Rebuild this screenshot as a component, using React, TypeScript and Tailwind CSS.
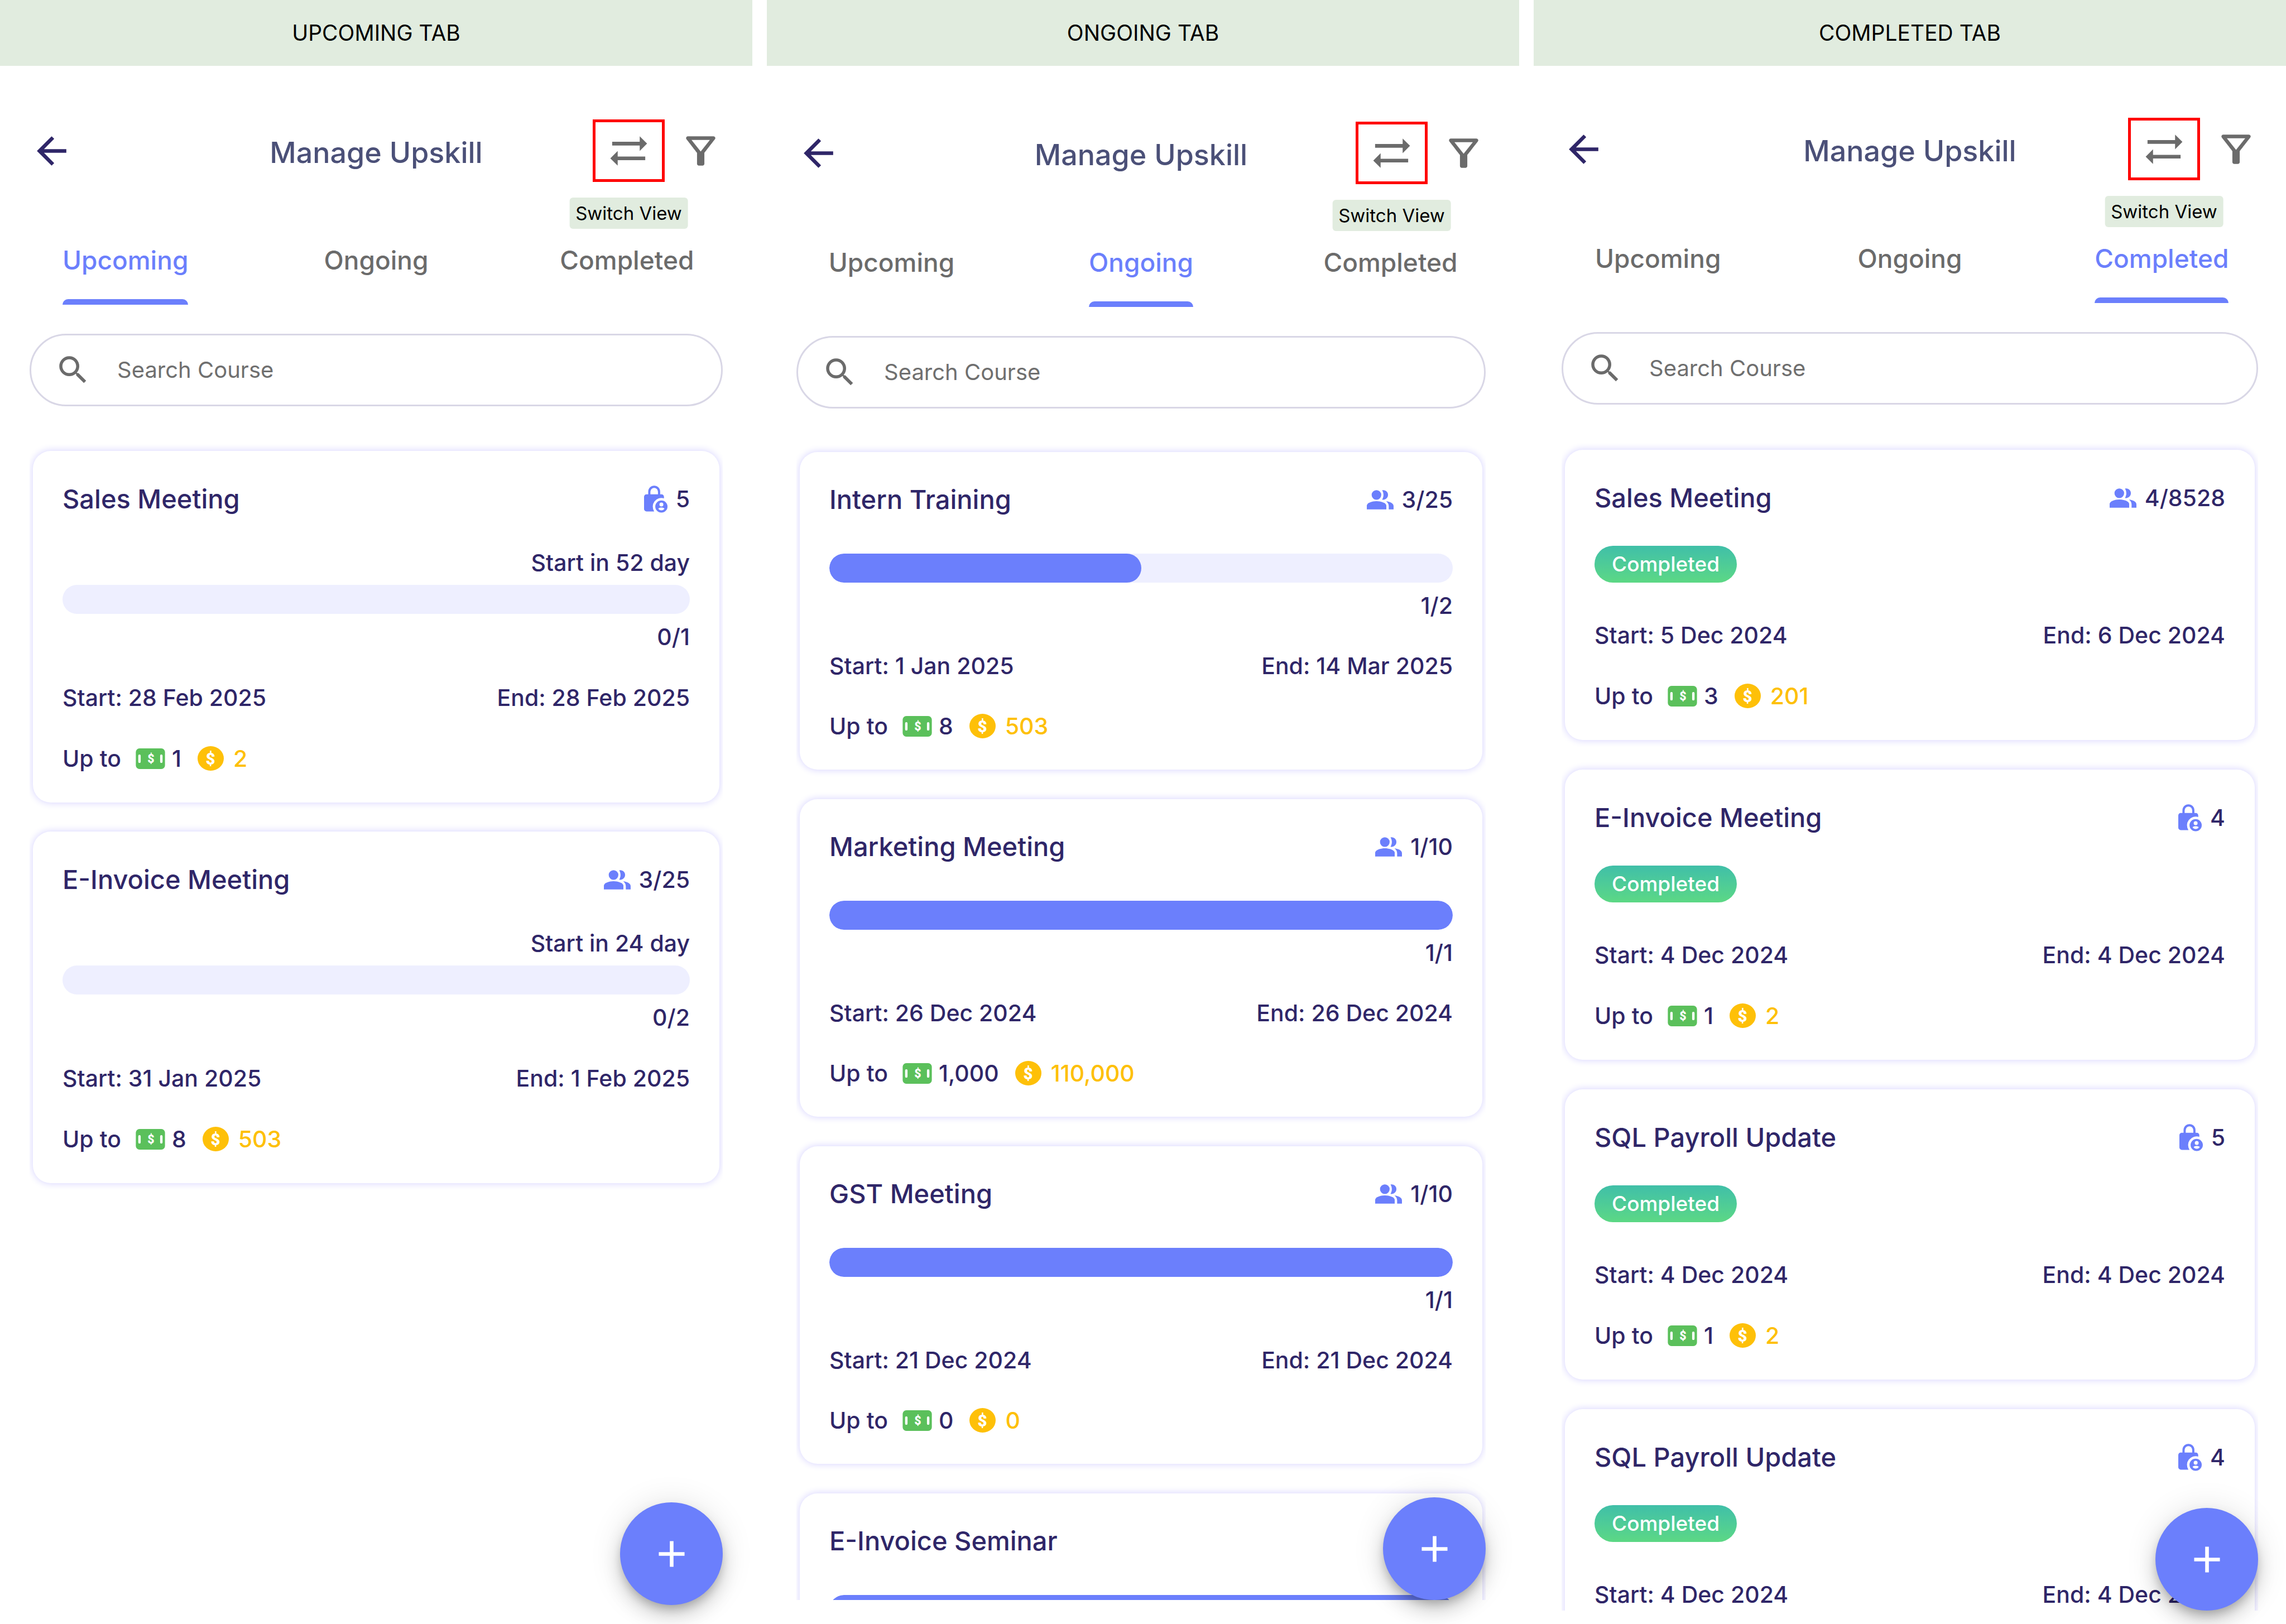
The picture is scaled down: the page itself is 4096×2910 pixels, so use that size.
import React from "react";
import { MdAdd, MdArrowBack, MdOutlineFilterAlt, MdSearch } from "react-icons/md";

type Course = {
  title: string;
  access: "group" | "private";
  seats: string;
  startsIn?: string;
  progress?: { done: number; total: number };
  dates?: { start: string; end: string };
  reward?: { cash: string; coins: string };
};

type Tab = "Upcoming" | "Ongoing" | "Completed";

type Screen = {
  banner: string;
  tab: Tab;
  frame: string;
  header: string;
  list: string;
  card: string;
  courses: Course[];
};

const TABS: Tab[] = ["Upcoming", "Ongoing", "Completed"];

const SCREENS: Screen[] = [
  {
    banner: "UPCOMING TAB",
    tab: "Upcoming",
    frame: "mb-[34px]",
    header: "pt-[96px]",
    list: "pt-[80px] gap-[52px]",
    card: "px-[53px] pt-[53px] pb-[51px] gap-[53px]",
    courses: [
      {
        title: "Sales Meeting",
        access: "private",
        seats: "5",
        startsIn: "Start in 52 day",
        progress: { done: 0, total: 1 },
        dates: { start: "28 Feb 2025", end: "28 Feb 2025" },
        reward: { cash: "1", coins: "2" },
      },
      {
        title: "E-Invoice Meeting",
        access: "group",
        seats: "3/25",
        startsIn: "Start in 24 day",
        progress: { done: 0, total: 2 },
        dates: { start: "31 Jan 2025", end: "1 Feb 2025" },
        reward: { cash: "8", coins: "503" },
      },
    ],
  },
  {
    banner: "ONGOING TAB",
    tab: "Ongoing",
    frame: "mr-[7px] mb-[43px]",
    header: "pt-[100px]",
    list: "pt-[78px] gap-[53px]",
    card: "px-[53px] pt-[52px] pb-[50px] gap-[52px]",
    courses: [
      {
        title: "Intern Training",
        access: "group",
        seats: "3/25",
        progress: { done: 1, total: 2 },
        dates: { start: "1 Jan 2025", end: "14 Mar 2025" },
        reward: { cash: "8", coins: "503" },
      },
      {
        title: "Marketing Meeting",
        access: "group",
        seats: "1/10",
        progress: { done: 1, total: 1 },
        dates: { start: "26 Dec 2024", end: "26 Dec 2024" },
        reward: { cash: "1,000", coins: "110,000" },
      },
      {
        title: "GST Meeting",
        access: "group",
        seats: "1/10",
        progress: { done: 1, total: 1 },
        dates: { start: "21 Dec 2024", end: "21 Dec 2024" },
        reward: { cash: "0", coins: "0" },
      },
      {
        title: "E-Invoice Seminar",
        access: "private",
        seats: "5",
        progress: { done: 1, total: 1 },
      },
    ],
  },
  {
    banner: "COMPLETED TAB",
    tab: "Completed",
    frame: "-mx-[3px] mb-[24px]",
    header: "pt-[93px]",
    list: "pt-[81px] gap-[53px]",
    card: "px-[53px] pt-[53px] pb-[51px] gap-[53px]",
    courses: [
      {
        title: "Sales Meeting",
        access: "group",
        seats: "4/8528",
        dates: { start: "5 Dec 2024", end: "6 Dec 2024" },
        reward: { cash: "3", coins: "201" },
      },
      {
        title: "E-Invoice Meeting",
        access: "private",
        seats: "4",
        dates: { start: "4 Dec 2024", end: "4 Dec 2024" },
        reward: { cash: "1", coins: "2" },
      },
      {
        title: "SQL Payroll Update",
        access: "private",
        seats: "5",
        dates: { start: "4 Dec 2024", end: "4 Dec 2024" },
        reward: { cash: "1", coins: "2" },
      },
      {
        title: "SQL Payroll Update",
        access: "private",
        seats: "4",
        dates: { start: "4 Dec 2024", end: "4 Dec 2024" },
      },
    ],
  },
];

function SwapIcon() {
  return (
    <svg viewBox="0 0 24 24" className="size-[79px] shrink-0" fill="currentColor" aria-hidden="true">
      <path d="M3 7h15V4l4 4-4 4V9H3zM21 17H6v3l-4-4 4-4v3h15z" />
    </svg>
  );
}

function LockPersonIcon() {
  return (
    <svg viewBox="0 0 192 224" className="h-[49px] w-[42px] shrink-0" aria-hidden="true">
      <path d="M43 76V50a40 40 0 0 1 80 0v26" fill="none" stroke="#6b7ffc" strokeWidth="18" />
      <path
        d="M20 72h123a20 20 0 0 1 20 20v13a71 71 0 0 0-80 107H20a20 20 0 0 1-20-20V92a20 20 0 0 1 20-20z"
        fill="#6b7ffc"
      />
      <circle cx="142" cy="172" r="50" fill="#6b7ffc" />
      <circle cx="142" cy="155" r="16" fill="#fff" />
      <path d="M117 188c8-10 42-10 50 0-10 20-40 20-50 0z" fill="#fff" />
    </svg>
  );
}

function PeopleIcon() {
  return (
    <svg viewBox="0 0 222 162" className="h-[35px] w-[48px] shrink-0" fill="#6b7ffc" aria-hidden="true">
      <circle cx="80" cy="41" r="40" />
      <path d="M127 2a40 40 0 1 1 0 78c15-24 15-54 0-78z" />
      <path d="M0 161v-31c0-24 44-38 80-38s82 14 82 38v31z" />
      <path d="M160 94c34 3 62 17 62 40v27h-40v-27c0-16-8-30-22-40z" />
    </svg>
  );
}

function CashIcon() {
  return (
    <svg viewBox="0 0 240 170" className="h-[37px] w-[53px] shrink-0" aria-hidden="true">
      <rect width="240" height="170" rx="30" fill="#5bc05b" />
      <rect x="20" y="50" width="20" height="70" rx="10" fill="#fff" />
      <rect x="200" y="50" width="20" height="70" rx="10" fill="#fff" />
      <text x="124" y="121" fontSize="98" fontWeight="900" textAnchor="middle" fill="#fff" className="font-[Roboto]">
        $
      </text>
    </svg>
  );
}

function CoinIcon() {
  return (
    <svg viewBox="0 0 214 200" className="h-[44px] w-[47px] shrink-0" aria-hidden="true">
      <ellipse cx="107" cy="100" rx="107" ry="100" fill="#fec008" />
      <text x="105" y="148" fontSize="134" fontWeight="900" textAnchor="middle" fill="#fff" className="font-[Roboto]">
        $
      </text>
    </svg>
  );
}

function ProgressBlock({ course }: { course: Course }) {
  const { done, total } = course.progress!;
  return (
    <div className="flex flex-col text-right">
      {course.startsIn && <p>{course.startsIn}</p>}
      <div
        role="progressbar"
        aria-label={`${course.title} progress`}
        aria-valuenow={done}
        aria-valuemax={total}
        className="mt-[12px] mb-[13px] h-[52px] overflow-hidden rounded-full bg-[#eeefff]"
      >
        <div className="h-full rounded-full bg-[#6b7ffc]" style={{ width: `${(done / total) * 100}%` }} />
      </div>
      <p>
        {done}/{total}
      </p>
    </div>
  );
}

function CourseCard({ course, className }: { course: Course; className: string }) {
  return (
    <li
      className={`flex shrink-0 flex-col rounded-[32px] bg-white text-[41px] leading-[56px] font-medium text-[#2f2668] shadow-[0_0_13px_1px_#d9d6ff] ${className}`}
    >
      <div className="flex items-center justify-between">
        <h2 className="text-[47px] leading-[66px]">{course.title}</h2>
        <div className="flex items-center gap-[15px]">
          {course.access === "group" ? <PeopleIcon /> : <LockPersonIcon />}
          <span>{course.seats}</span>
        </div>
      </div>
      {course.progress ? (
        <ProgressBlock course={course} />
      ) : (
        <div className="mb-[13px] flex">
          <span className="rounded-full bg-linear-to-b from-[#40bfa8] to-[#5cd884] px-[31px] text-[37px] leading-[66px] text-white">
            Completed
          </span>
        </div>
      )}
      {course.dates && (
        <div className="flex justify-between">
          <span>Start: {course.dates.start}</span>
          <span>End: {course.dates.end}</span>
        </div>
      )}
      {course.reward && (
        <div className="flex items-center">
          <span className="mr-[26px]">Up to</span>
          <CashIcon />
          <span className="mr-[29px] ml-[12px]">{course.reward.cash}</span>
          <CoinIcon />
          <span className="ml-[17px] text-[#fec008]">{course.reward.coins}</span>
        </div>
      )}
    </li>
  );
}

function ScreenView({ screen }: { screen: Screen }) {
  return (
    <section className="flex min-h-0 min-w-0 flex-col overflow-hidden">
      <h1 className="bg-[#e1ecdf] text-center text-[39px] leading-[118px] text-black">{screen.banner}</h1>
      <div className={`relative flex min-h-0 flex-1 flex-col ${screen.frame}`}>
        <header className={`grid grid-cols-[1fr_auto_1fr] items-center px-[53px] ${screen.header}`}>
          <button type="button" aria-label="Back" className="justify-self-start text-[#2f2668]">
            <MdArrowBack className="size-[79px]" />
          </button>
          <p className="pt-[8px] text-[52px] leading-[64px] font-medium text-[#4b5078]">Manage Upskill</p>
          <div className="flex items-center gap-[25px] justify-self-end text-[#6b6b6b]">
            <div className="relative">
              <button
                type="button"
                aria-label="Switch View"
                className="flex h-[112px] w-[129px] items-center justify-center border-[5px] border-[#ff0000]"
              >
                <SwapIcon />
              </button>
              <div
                role="tooltip"
                className="absolute top-full left-1/2 mt-[28px] -translate-x-1/2 rounded-[6px] bg-[#e1ecdf] px-[11px] text-[33px] leading-[56px] whitespace-nowrap text-black"
              >
                Switch View
              </div>
            </div>
            <button type="button" aria-label="Filter">
              <MdOutlineFilterAlt className="size-[79px]" />
            </button>
          </div>
        </header>

        <div role="tablist" className="mt-[108px] grid grid-cols-3 justify-items-center">
          {TABS.map((tab) => {
            const active = tab === screen.tab;
            return (
              <button
                key={tab}
                type="button"
                role="tab"
                aria-selected={active}
                className={`flex flex-col text-[46px] leading-[64px] font-medium ${
                  active ? "text-[#6b7ffc]" : "text-[#6b6b6b]"
                }`}
              >
                {tab}
                <span className={`mt-[38px] h-[10px] w-full rounded-t-[10px] ${active ? "bg-[#6b7ffc]" : ""}`} />
              </button>
            );
          })}
        </div>

        <label className="mx-[53px] mt-[52px] flex h-[130px] shrink-0 items-center gap-[46px] rounded-full border-[3px] border-[#d9d7e6] pr-[53px] pl-[42px] text-[#6b6b6b]">
          <MdSearch className="size-[66px] shrink-0" />
          <input
            type="search"
            aria-label="Search Course"
            placeholder="Search Course"
            className="min-w-0 flex-1 text-[40px] leading-[56px] outline-none placeholder:text-[#6f6f6f]"
          />
        </label>

        <ul className={`mx-[53px] flex min-h-0 flex-1 flex-col overflow-hidden px-[6px] ${screen.list}`}>
          {screen.courses.map((course, index) => (
            <CourseCard key={index} course={course} className={screen.card} />
          ))}
        </ul>

        <button
          type="button"
          aria-label="Add course"
          className="absolute right-[53px] bottom-0 flex size-[184px] items-center justify-center rounded-full bg-[#6b7ffc] text-white shadow-[0_10px_16px_-3px_rgba(0,0,0,0.2),0_20px_33px_0_rgba(0,0,0,0.14),0_3px_59px_0_rgba(0,0,0,0.12)]"
        >
          <MdAdd className="size-[79px]" />
        </button>
      </div>
    </section>
  );
}

export default function App() {
  return (
    <main className="grid h-screen grid-cols-3 gap-[26px] overflow-hidden bg-white font-[Inter,sans-serif]">
      {SCREENS.map((screen) => (
        <ScreenView key={screen.tab} screen={screen} />
      ))}
    </main>
  );
}
